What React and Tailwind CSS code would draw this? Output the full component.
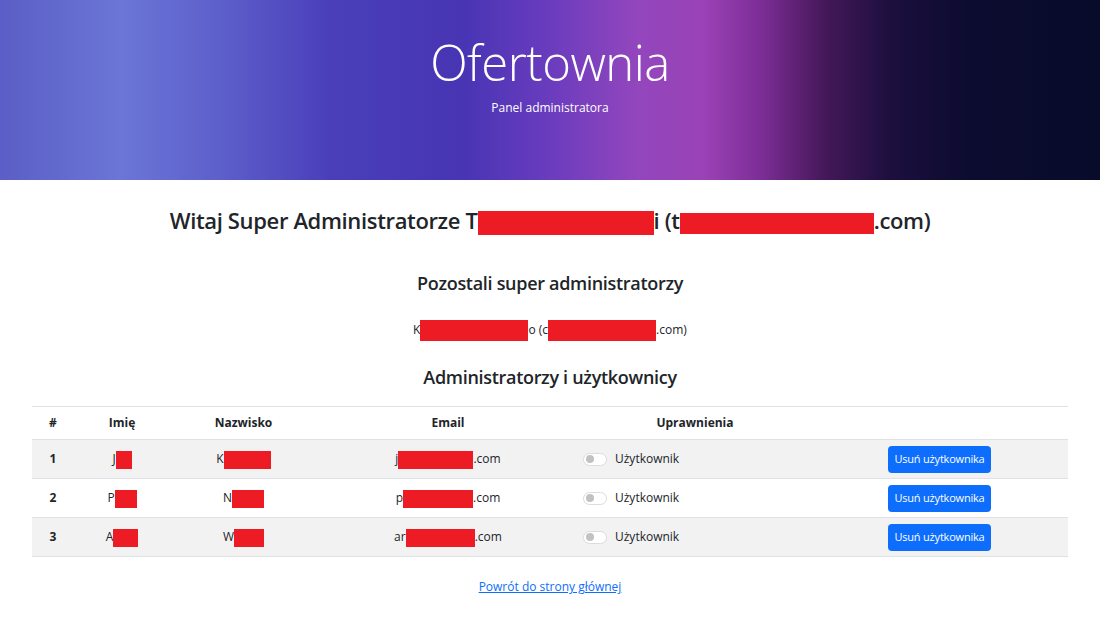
import React from 'react';

const users = [
  { id: 1, first: 'J', firstW: 16, last: 'K', lastW: 47, mail: 'j', mailW: 75 },
  { id: 2, first: 'P', firstW: 22, last: 'N', lastW: 32, mail: 'p', mailW: 70 },
  { id: 3, first: 'A', firstW: 25, last: 'W', lastW: 30, mail: 'ar', mailW: 69 },
];

// red box hiding personal data
const Hidden = ({ w, h = 18 }) => (
  <span className="inline-block align-middle bg-[#ed1c24]" style={{ width: w, height: h }} />
);

const Toggle = () => (
  <span className="inline-flex items-center w-[24px] h-[13px] rounded-full border border-[#dcdcdc] bg-white px-[2px]">
    <span className="w-[8px] h-[8px] rounded-full bg-[#c2c2c2]" />
  </span>
);

export default function App() {
  return (
    <div className="min-h-screen bg-white text-[#212529] font-['Open_Sans','Noto_Sans',sans-serif]">
      {/* Hero */}
      <header className="h-[180px] flex flex-col items-center text-white bg-[linear-gradient(90deg,#5a5ec6_0%,#6b76d6_11%,#5d5fcb_20%,#4a3fb9_30%,#4735b4_42%,#6a3cbe_50%,#9346bd_58%,#9a42b6_64%,#7e2e98_69%,#451859_75%,#1c0f3e_81%,#0c0c30_88%,#080b2a_100%)]">
        <h1 className="mt-[32px] text-[49px] font-light leading-[60px] tracking-[-0.5px]">Ofertownia</h1>
        <p className="mt-[7px] text-[12px]">Panel administratora</p>
      </header>

      <main className="flex flex-col items-center">
        <h2 className="mt-[25px] text-[22px] font-semibold leading-[30px] tracking-[-0.35px] whitespace-nowrap">
          Witaj Super Administratorze T<Hidden w={176} h={24} />i (t<Hidden w={194} h={21} />.com)
        </h2>

        <h3 className="mt-[35px] text-[18px] font-semibold leading-[26px] tracking-[-0.3px]">Pozostali super administratorzy</h3>

        <p className="mt-[24px] text-[12px] leading-[20px]">
          K<Hidden w={108} h={21} />o (c<Hidden w={108} h={21} />.com)
        </p>

        <h3 className="mt-[23px] text-[18px] font-semibold leading-[26px] tracking-[-0.3px]">Administratorzy i użytkownicy</h3>

        <table className="mt-[16px] w-[1036px] table-fixed border-collapse text-[12px]">
          <colgroup>
            <col className="w-[42px]" />
            <col className="w-[96px]" />
            <col className="w-[147px]" />
            <col className="w-[262px]" />
            <col className="w-[232px]" />
            <col className="w-[257px]" />
          </colgroup>
          <thead>
            <tr className="h-[33px] border-y border-[#dee2e6]">
              <th className="font-bold">#</th>
              <th className="font-bold">Imię</th>
              <th className="font-bold">Nazwisko</th>
              <th className="font-bold">Email</th>
              <th className="font-bold">Uprawnienia</th>
              <th />
            </tr>
          </thead>
          <tbody>
            {users.map((u, i) => (
              <tr key={u.id} className={`h-[39px] border-b border-[#dee2e6] ${i % 2 === 0 ? 'bg-[#f2f2f2]' : 'bg-white'}`}>
                <td className="text-center font-bold">{u.id}</td>
                <td className="text-center">{u.first}<Hidden w={u.firstW} /></td>
                <td className="text-center">{u.last}<Hidden w={u.lastW} /></td>
                <td className="text-center">{u.mail}<Hidden w={u.mailW} />.com</td>
                <td className="pl-[4px]">
                  <div className="flex items-center gap-[8px]">
                    <Toggle />
                    <span>Użytkownik</span>
                  </div>
                </td>
                <td className="text-center">
                  <button className="h-[27px] px-[6px] rounded-[4px] bg-[#0d6efd] text-white text-[11px] tracking-[-0.2px]">
                    Usuń użytkownika
                  </button>
                </td>
              </tr>
            ))}
          </tbody>
        </table>

        <a href="#" className="mt-[21px] text-[12px] text-[#0d6efd] underline">Powrót do strony głównej</a>
      </main>
    </div>
  );
}
